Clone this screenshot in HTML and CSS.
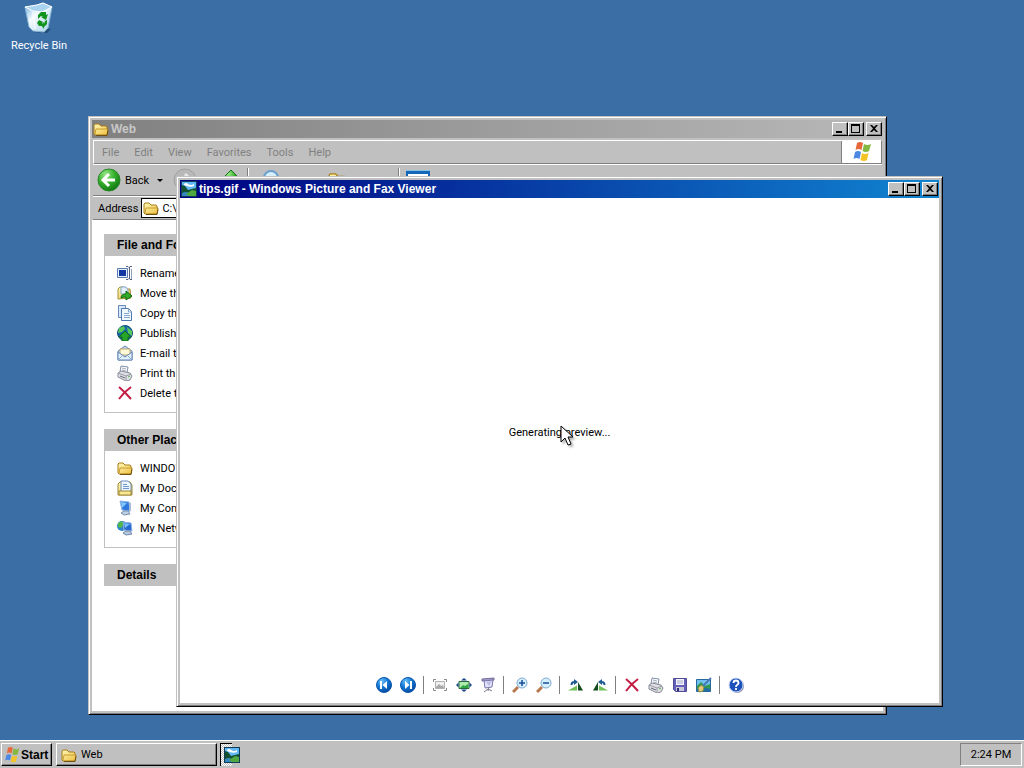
FILE: index.html
```html
<!DOCTYPE html>
<html lang="en">
<head>
    <meta charset="UTF-8">
    <meta name="viewport" content="width=device-width, initial-scale=1.0">
    <title>tips.gif - Windows Picture and Fax Viewer</title>
    <link rel="stylesheet" href="styles.css">
</head>
<body>
    <!-- Shared icons -->
    <svg class="icon-defs" aria-hidden="true">
        <defs>
            <linearGradient id="gFolder" x1="0" y1="0" x2="1" y2="1">
                <stop offset="0" stop-color="#fff8b8"/><stop offset="1" stop-color="#eec040"/>
            </linearGradient>
            <radialGradient id="gGreen" cx=".35" cy=".25" r=".8">
                <stop offset="0" stop-color="#9be88a"/><stop offset=".5" stop-color="#35b02c"/><stop offset="1" stop-color="#0f7412"/>
            </radialGradient>
            <radialGradient id="gBlue" cx=".35" cy=".25" r=".8">
                <stop offset="0" stop-color="#6cc0f8"/><stop offset=".5" stop-color="#1478d4"/><stop offset="1" stop-color="#06469c"/>
            </radialGradient>
            <linearGradient id="gBin" x1="0" y1="0" x2="1" y2="1">
                <stop offset="0" stop-color="#6ca8dc"/><stop offset=".4" stop-color="#f4fcff"/><stop offset="1" stop-color="#a4cce8"/>
            </linearGradient>
            <symbol id="folder" viewBox="0 0 16 16">
                <path d="M1 13V4l1-1h4l2 2h5l1 1v2h1l-1 6H2z" fill="url(#gFolder)" stroke="#a87c18"/>
                <path d="M2 13l1-5h11" fill="none" stroke="#c89c30"/>
                <path d="M3 14.500h11l1-5" fill="none" stroke="#705010"/>
            </symbol>
            <symbol id="picture" viewBox="0 0 16 16">
                <path d="M0 0h16v16H0z" fill="#103c58"/>
                <path d="M1 1h14v9H1z" fill="#60b8f4"/>
                <path d="M3 3q2-2 4 0 3 2 6 0v2q-4 2-10-1z" fill="#fff"/>
                <path d="M1 4l3 1 3 4 8-2v6H1z" fill="#125030"/>
                <path d="M1 12q4-2 7 0t7 0v3H1z" fill="#3488c0"/>
                <path d="M5 13l6-4 4 1v5H8z" fill="#50a840"/>
            </symbol>
            <symbol id="flag" viewBox="0 0 20 20">
                <path d="M5 1q3-2 6 0L9.500 8q-3-2-6 0z" fill="#e8683c"/>
                <path d="M12 2q3 2 7 0l-2 7q-3 2-6.500 0z" fill="#84b840"/>
                <path d="M3 10q3-2 6 0l-1.500 7q-3-2-6 0z" fill="#4c88e4"/>
                <path d="M10 11q3 2 6.500 0L15 18q-3 2-6.500 0z" fill="#f4c424"/>
            </symbol>
            <symbol id="bin" viewBox="0 0 32 32">
                <path d="M10 30l14 1 4-4-13-2z" fill="#183858" opacity=".6"/>
                <path d="M2 5l4 20 4 4 11 1 4-4 4-21-9-4-6 2z" fill="url(#gBin)" stroke="#88b4d4"/>
                <path d="M2 5l8 4 9 1 10-5-9-4-6 2z" fill="#a8d4f0" stroke="#fff"/>
                <path d="M10 10l2 17" stroke="#fff" stroke-width="2" opacity=".6"/>
                <path d="M15 17v-4l3-3h5v3l2-1-2 6-5-3 2-1h-2zM24 18v4l-3 3v2l-3-4 3-3v2l1-3zM16 18l4 2-1 1 1 3h-4l-2-3z" fill="#12941c"/>
            </symbol>
            <symbol id="back" viewBox="0 0 24 24">
                <circle cx="12" cy="12" r="11" fill="url(#gGreen)" stroke="#288828"/>
                <path d="M18 12H7M12 6l-6 6 6 6" fill="none" stroke="#fff" stroke-width="3"/>
            </symbol>
            <symbol id="forward" viewBox="0 0 24 24">
                <circle cx="12" cy="12" r="11" fill="#b8b8b8" stroke="#a0a0a0"/>
                <path d="M6 12h11M12 6l6 6-6 6" fill="none" stroke="#e8e8e8" stroke-width="3"/>
            </symbol>
            <symbol id="up" viewBox="0 0 20 20">
                <path d="M1 8h18v11H1z" fill="url(#gFolder)" stroke="#a87c18"/>
                <path d="M10 0l8 8h-4v8H6V8H2z" fill="url(#gGreen)" stroke="#187018"/>
            </symbol>
            <symbol id="search" viewBox="0 0 20 20">
                <path d="M5 13l-4 5" stroke="#b07840" stroke-width="3"/>
                <circle cx="9" cy="8" r="7" fill="#d8f0fc" stroke="#6ca0cc" stroke-width="2"/>
            </symbol>
            <symbol id="views" viewBox="0 0 24 20">
                <path d="M1 1h22v18H1z" fill="#fff" stroke="#1864b0" stroke-width="2"/>
                <path d="M0 0h24v4H0z" fill="#1468b8"/>
                <path d="M0 0h24v1H0z" fill="#88c0ec"/>
            </symbol>
            <symbol id="rename" viewBox="0 0 16 16">
                <path d="M.5 3.500h10v9H.5z" fill="#e8f0fc" stroke="#5878b0"/>
                <path d="M2 5h7v6H2z" fill="#1038a0"/>
                <path d="M9 1.500h2l1 1 1-1h2M12.500 2v12M9 14.500h2l1-1 1 1h2" fill="none" stroke="#506080"/>
                <path d="M14.500 4v10" stroke="#90a0b8"/>
            </symbol>
            <symbol id="move" viewBox="0 0 16 16">
                <path d="M1 14V4l2-2h4l1 2h5l1 9z" fill="url(#gFolder)" stroke="#a09038"/>
                <path d="M4 2h5l2 3v4H4z" fill="#e4f0fc" stroke="#88a8cc"/>
                <path d="M4 13q0-4 5-4V6l6 5-6 4v-3q-3 0-5 1z" fill="#30ac28" stroke="#106810"/>
            </symbol>
            <symbol id="copy" viewBox="0 0 16 16">
                <path d="M1.500.5h7v12h-7z" fill="#d8e8fc" stroke="#6488b8"/>
                <path d="M4.500 3.500h7l3 3v9h-10z" fill="#f0f8ff" stroke="#5078ac"/>
                <path d="M11.500 4v3h3M7 8.500h5M7 10.500h6M7 12.500h6" fill="none" stroke="#88a8d0"/>
            </symbol>
            <symbol id="publish" viewBox="0 0 16 16">
                <circle cx="8" cy="8" r="7.500" fill="#1868a8" stroke="#105078"/>
                <path d="M2 3l5-2 1 3-3 3-4 1zM10 2l5 4v5l-4-3z" fill="#58c858"/>
                <path d="M8 6l6 6h-3v4H5v-4H2z" fill="#28a428" stroke="#106c18"/>
            </symbol>
            <symbol id="email" viewBox="0 0 16 16">
                <path d="M1 6l7-5 7 5v9H1z" fill="#c0d8f4" stroke="#6484b0"/>
                <path d="M3 4h10v6H3z" fill="#fff8d8" stroke="#c0a868"/>
                <path d="M1 7l7 5 7-5v8H1z" fill="#e0f0ff" stroke="#6484b0"/>
                <path d="M1 15l5-5M15 15l-5-5" stroke="#88a8cc"/>
            </symbol>
            <symbol id="printer" viewBox="0 0 16 16">
                <path d="M3 7l1-6 7 1-1 6z" fill="#fff" stroke="#8090a8"/>
                <path d="M5 3l4 1M5 5l4 1" stroke="#a0a8b8"/>
                <path d="M1 8l3-2 9 2 2 3-2 4-4 1-8-4z" fill="#e0e0e4" stroke="#888c98"/>
                <path d="M1 8l8 3 5-2M9 11v5" fill="none" stroke="#989ca8"/>
                <path d="M3 11l5 2" stroke="#606878"/>
                <path d="M11 12l2-1" stroke="#58b050"/>
            </symbol>
            <symbol id="delete" viewBox="0 0 16 16">
                <path d="M2 2q6 5 12 12M14 2Q7 7 2 14" fill="none" stroke="#c41c44" stroke-width="2"/>
            </symbol>
            <symbol id="documents" viewBox="0 0 16 16">
                <path d="M1 15V4l2-2h10l2 3v10z" fill="url(#gFolder)" stroke="#a08838"/>
                <path d="M4 1h7l3 3v9H4z" fill="#eef6ff" stroke="#6c90bc"/>
                <path d="M6 4.500h4M6 6.500h6M6 8.500h6" stroke="#6c98cc"/>
                <path d="M2 11h12v4H2z" fill="#f8e890" stroke="#a08838"/>
            </symbol>
            <symbol id="computer" viewBox="0 0 16 16">
                <path d="M3 1l9 1 1 9-8-1z" fill="#2c78dc" stroke="#8cb4e4"/>
                <path d="M4 2l6 1-5 5z" fill="#80c8fc"/>
                <path d="M12 2l2 1v8l-2 1z" fill="#a8bcd8"/>
                <path d="M7 11h4l2 3-6 1-3-2z" fill="#c0d0e4" stroke="#7890b0"/>
            </symbol>
            <symbol id="network" viewBox="0 0 16 16">
                <circle cx="5" cy="6" r="5" fill="#2c84cc"/>
                <path d="M1 3l4-2 2 3-3 4-3-1z" fill="#50b848"/>
                <path d="M6 2l8 1 1 8-8-1z" fill="#2468d0" stroke="#8cb0e0"/>
                <path d="M7 3l6 1-5 4z" fill="#78c0f8"/>
                <path d="M9 11h4l2 3-6 1-3-2z" fill="#b8c8dc" stroke="#7088a8"/>
            </symbol>
            <symbol id="previous" viewBox="0 0 16 16">
                <circle cx="8" cy="8" r="7.500" fill="url(#gBlue)" stroke="#0c58b0"/>
                <path d="M5 4v8" stroke="#fff" stroke-width="2"/>
                <path d="M11 4v8L6.500 8z" fill="#fff"/>
            </symbol>
            <symbol id="next" viewBox="0 0 16 16">
                <circle cx="8" cy="8" r="7.500" fill="url(#gBlue)" stroke="#0c58b0"/>
                <path d="M11 4v8" stroke="#fff" stroke-width="2"/>
                <path d="M5 4v8l4.500-4z" fill="#fff"/>
            </symbol>
            <symbol id="bestfit" viewBox="0 0 16 16">
                <path d="M1.500 5V2.500H4M12 2.500h2.500V5M14.500 11v2.500H12M4 13.500H1.500V11" fill="none" stroke="#888"/>
                <path d="M3.500 4.500h9v7h-9z" fill="#f0f0f0" stroke="#b0b0b0"/>
                <path d="M4 10l3-3 2 2 2-1 1 3H4z" fill="#a8a8a8"/>
            </symbol>
            <symbol id="actual" viewBox="0 0 16 16">
                <path d="M3 4.500h10v7H3z" fill="#b0ecb0" stroke="#286838"/>
                <path d="M4 11l3-3 2 1 3-2v4z" fill="#30a840"/>
                <path d="M5 3.500h6L8 1zM5 12.500h6L8 15zM2.500 5.500v5L0 8zM13.500 5.500v5L16 8z" fill="#184888"/>
            </symbol>
            <symbol id="slideshow" viewBox="0 0 16 16">
                <path d="M2 2l12-1v2L2 4z" fill="#a8a0d0" stroke="#706c98"/>
                <path d="M4 4l9-1-1 7-7 1z" fill="#e4e4fc" stroke="#7c78ac"/>
                <path d="M9 10l-1 4M8 12l-4 3M8 12l4 2" stroke="#807c90"/>
                <path d="M6 5l3 4 3-5" fill="#c0bce8"/>
            </symbol>
            <symbol id="zoomin" viewBox="0 0 16 16">
                <path d="M6 10l-5 5" stroke="#b87850" stroke-width="3"/>
                <circle cx="10" cy="6" r="5" fill="#d4f0fc" stroke="#80a8d0"/>
                <path d="M7 6h6M10 3v6" stroke="#184c98" stroke-width="1.500"/>
            </symbol>
            <symbol id="zoomout" viewBox="0 0 16 16">
                <path d="M6 10l-5 5" stroke="#b87850" stroke-width="3"/>
                <circle cx="10" cy="6" r="5" fill="#d4f0fc" stroke="#80a8d0"/>
                <path d="M7 6h6" stroke="#184c98" stroke-width="1.500"/>
            </symbol>
            <symbol id="rotateright" viewBox="0 0 16 16">
                <path d="M0 13.500h9v-5z" fill="#70c058"/>
                <path d="M10 13.500V5l5 8.500z" fill="#104c20"/>
                <path d="M3.500 8q0-3 3-3" fill="none" stroke="#205c94" stroke-width="2"/>
                <path d="M6 2l4 3-4 3z" fill="#205c94"/>
            </symbol>
            <symbol id="rotateleft" viewBox="0 0 16 16">
                <path d="M16 13.500H7v-5z" fill="#70c058"/>
                <path d="M6 13.500V5l-5 8.500z" fill="#104c20"/>
                <path d="M12.500 8q0-3-3-3" fill="none" stroke="#205c94" stroke-width="2"/>
                <path d="M10 2L6 5l4 3z" fill="#205c94"/>
            </symbol>
            <symbol id="save" viewBox="0 0 16 16">
                <path d="M1.500 1.500h13v13h-11l-2-2z" fill="#6460b8" stroke="#504c98"/>
                <path d="M4 2h8v6H4z" fill="#f4f4ff"/>
                <path d="M5 4h6M5 6h6" stroke="#a8a8c8"/>
                <path d="M4 10h8v4H4z" fill="#c8c8dc"/>
                <path d="M5 11h2v3H5z" fill="#302c70"/>
            </symbol>
            <symbol id="edit" viewBox="0 0 16 16">
                <path d="M.5 2.500h14v12H.5z" fill="#70c0f0" stroke="#28689c"/>
                <path d="M1 9l4-4 4 4 5-2v7H1z" fill="#309850"/>
                <path d="M1 12q6-3 13 0v2H1z" fill="#2070a8"/>
                <path d="M15 1L7 9" stroke="#4878b8" stroke-width="2"/>
                <path d="M5 8l-3 3 1 4 4-1 1-4z" fill="#e8c878" stroke="#809048"/>
            </symbol>
            <symbol id="help" viewBox="0 0 16 16">
                <circle cx="9" cy="9" r="7" fill="#8890b0"/>
                <circle cx="8" cy="8" r="7" fill="#1c50bc" stroke="#d0dcf4"/>
                <path d="M5.500 6q0-2.500 2.500-2.500T10.500 6q0 1-1.500 2-1 .5-1 2M8 11v2" fill="none" stroke="#fff" stroke-width="1.800"/>
            </symbol>
            <symbol id="minimize" viewBox="0 0 12 10"><path d="M2 7h6v2H2z"/></symbol>
            <symbol id="maximize" viewBox="0 0 12 10"><path d="M1 0h9v9H1zM2 2v6h7V2z" fill-rule="evenodd"/></symbol>
            <symbol id="close" viewBox="0 0 12 10"><path d="M2 1h2l2 2 2-2h2L7 4.500 10 8H8L6 6 4 8H2l3-3.500z"/></symbol>
            <symbol id="cursor" viewBox="0 0 14 22">
                <path d="M1 1v16l4-4 3 7 3-1-3-7h5z" fill="#fff" stroke="#000"/>
            </symbol>
        </defs>
    </svg>

    <main class="desktop">
        <a class="shortcut" href="#">
            <svg class="icon-large"><use href="#bin"/></svg>
            <span>Recycle Bin</span>
        </a>

        <!-- Explorer window -->
        <section class="window explorer">
            <header class="title-bar inactive">
                <svg class="icon"><use href="#folder"/></svg>
                <h2>Web</h2>
                <div class="window-controls">
                    <button type="button" aria-label="Minimize"><svg><use href="#minimize"/></svg></button>
                    <button type="button" aria-label="Maximize"><svg><use href="#maximize"/></svg></button>
                    <button type="button" class="close" aria-label="Close"><svg><use href="#close"/></svg></button>
                </div>
            </header>

            <div class="menu-row">
                <nav class="menu">
                    <button type="button">File</button>
                    <button type="button">Edit</button>
                    <button type="button">View</button>
                    <button type="button">Favorites</button>
                    <button type="button">Tools</button>
                    <button type="button">Help</button>
                </nav>
                <div class="brand"><svg><use href="#flag"/></svg></div>
            </div>

            <div class="toolbar">
                <button type="button"><svg class="icon-nav"><use href="#back"/></svg>Back<span class="arrow"></span></button>
                <button type="button" aria-label="Forward"><svg class="icon-nav"><use href="#forward"/></svg><span class="arrow"></span></button>
                <button type="button" aria-label="Up"><svg class="icon-tool"><use href="#up"/></svg></button>
                <span class="divider"></span>
                <div class="toolbar-group">
                    <button type="button"><svg class="icon-tool"><use href="#search"/></svg>Search</button>
                    <button type="button"><svg class="icon-tool"><use href="#folder"/></svg>Folders</button>
                </div>
                <span class="divider"></span>
                <button type="button" aria-label="Views"><svg class="icon-nav"><use href="#views"/></svg></button>
            </div>

            <div class="address-bar">
                <label for="address">Address</label>
                <div class="address-field">
                    <svg class="icon"><use href="#folder"/></svg>
                    <input type="text" id="address" value="C:\WINDOWS\Web">
                </div>
            </div>

            <div class="explorer-body">
                <aside class="task-pane">
                    <section class="panel">
                        <h3>File and Folder Tasks</h3>
                        <ul>
                            <li><a href="#"><svg class="icon"><use href="#rename"/></svg>Rename this file</a></li>
                            <li><a href="#"><svg class="icon"><use href="#move"/></svg>Move this file</a></li>
                            <li><a href="#"><svg class="icon"><use href="#copy"/></svg>Copy this file</a></li>
                            <li><a href="#"><svg class="icon"><use href="#publish"/></svg>Publish this file</a></li>
                            <li><a href="#"><svg class="icon"><use href="#email"/></svg>E-mail this file</a></li>
                            <li><a href="#"><svg class="icon"><use href="#printer"/></svg>Print this file</a></li>
                            <li><a href="#"><svg class="icon"><use href="#delete"/></svg>Delete this file</a></li>
                        </ul>
                    </section>
                    <section class="panel">
                        <h3>Other Places</h3>
                        <ul>
                            <li><a href="#"><svg class="icon"><use href="#folder"/></svg>WINDOWS</a></li>
                            <li><a href="#"><svg class="icon"><use href="#documents"/></svg>My Documents</a></li>
                            <li><a href="#"><svg class="icon"><use href="#computer"/></svg>My Computer</a></li>
                            <li><a href="#"><svg class="icon"><use href="#network"/></svg>My Network Places</a></li>
                        </ul>
                    </section>
                    <section class="panel">
                        <h3>Details</h3>
                    </section>
                </aside>
            </div>
        </section>

        <!-- Picture viewer window -->
        <section class="window viewer">
            <header class="title-bar">
                <svg class="icon"><use href="#picture"/></svg>
                <h2>tips.gif - Windows Picture and Fax Viewer</h2>
                <div class="window-controls">
                    <button type="button" aria-label="Minimize"><svg><use href="#minimize"/></svg></button>
                    <button type="button" aria-label="Maximize"><svg><use href="#maximize"/></svg></button>
                    <button type="button" class="close" aria-label="Close"><svg><use href="#close"/></svg></button>
                </div>
            </header>
            <div class="preview">
                <p>Generating preview...<svg class="cursor"><use href="#cursor"/></svg></p>
            </div>
            <div class="viewer-tools">
                <button type="button" aria-label="Previous Image"><svg class="icon"><use href="#previous"/></svg></button>
                <button type="button" aria-label="Next Image"><svg class="icon"><use href="#next"/></svg></button>
                <span class="divider"></span>
                <button type="button" aria-label="Best Fit"><svg class="icon"><use href="#bestfit"/></svg></button>
                <button type="button" aria-label="Actual Size"><svg class="icon"><use href="#actual"/></svg></button>
                <button type="button" aria-label="Start Slide Show"><svg class="icon"><use href="#slideshow"/></svg></button>
                <span class="divider"></span>
                <button type="button" aria-label="Zoom In"><svg class="icon"><use href="#zoomin"/></svg></button>
                <button type="button" aria-label="Zoom Out"><svg class="icon"><use href="#zoomout"/></svg></button>
                <span class="divider"></span>
                <button type="button" aria-label="Rotate Clockwise"><svg class="icon"><use href="#rotateright"/></svg></button>
                <button type="button" aria-label="Rotate Counterclockwise"><svg class="icon"><use href="#rotateleft"/></svg></button>
                <span class="divider"></span>
                <button type="button" aria-label="Delete"><svg class="icon"><use href="#delete"/></svg></button>
                <button type="button" aria-label="Print"><svg class="icon"><use href="#printer"/></svg></button>
                <button type="button" aria-label="Copy To"><svg class="icon"><use href="#save"/></svg></button>
                <button type="button" aria-label="Edit"><svg class="icon"><use href="#edit"/></svg></button>
                <span class="divider"></span>
                <button type="button" aria-label="Help"><svg class="icon"><use href="#help"/></svg></button>
            </div>
        </section>
    </main>

    <footer class="taskbar">
        <button type="button" class="start"><svg class="icon"><use href="#flag"/></svg>Start</button>
        <button type="button" class="task"><svg class="icon"><use href="#folder"/></svg>Web</button>
        <button type="button" class="task-pressed" aria-label="tips.gif"><svg class="icon"><use href="#picture"/></svg></button>
        <div class="clock">2:24 PM</div>
    </footer>
</body>
</html>
```
FILE: styles.css
```css
* {
    margin: 0;
    padding: 0;
    box-sizing: border-box;
}

body {
    display: flex;
    flex-direction: column;
    height: 100vh;
    overflow: hidden;
    background: #3a6ea5;
    color: #000;
    font: 11px/15px Roboto, Arial, sans-serif;
}

button {
    display: flex;
    align-items: center;
    border: none;
    background: none;
    color: inherit;
    font: inherit;
}

a {
    color: inherit;
    text-decoration: none;
}

svg {
    display: block;
    flex: none;
}

.icon-defs {
    position: absolute;
    width: 0;
    height: 0;
}

.icon {
    width: 16px;
    height: 16px;
}

.icon-tool {
    width: 20px;
    height: 20px;
}

.icon-nav {
    width: 24px;
    height: 24px;
}

.icon-large {
    width: 32px;
    height: 32px;
}

/* Desktop */
.desktop {
    position: relative;
    flex: 1;
    min-height: 0;
}

.shortcut {
    display: flex;
    flex-direction: column;
    align-items: center;
    gap: 4px;
    width: 78px;
    padding-top: 2px;
    color: #fff;
}

/* Windows */
.window {
    position: absolute;
    display: flex;
    flex-direction: column;
    padding: 3px;
    background: #c0c0c0;
    border: 1px solid;
    border-color: #c0c0c0 #000 #000 #c0c0c0;
    box-shadow: inset 1px 1px #fff, inset -1px -1px #808080;
}

.explorer {
    top: 116px;
    right: 137px;
    bottom: 25px;
    left: 88px;
}

.viewer {
    top: 176px;
    right: 81px;
    bottom: 33px;
    left: 176px;
}

.title-bar {
    display: flex;
    align-items: center;
    flex: none;
    gap: 2px;
    height: 18px;
    padding: 0 1px;
    background: linear-gradient(90deg, #000080, #1084d0);
    color: #fff;
}

.title-bar.inactive {
    background: linear-gradient(90deg, #808080, #b8b8b8);
    color: #c8c8c8;
}

.title-bar h2 {
    flex: 1;
    font: bold 12px/14px "Liberation Sans", Arial, sans-serif;
}

.window-controls {
    display: flex;
}

.window-controls button {
    justify-content: center;
    width: 16px;
    height: 14px;
    background: #c0c0c0;
    color: #000;
    border: 1px solid;
    border-color: #fff #000 #000 #fff;
    box-shadow: inset -1px -1px #808080;
}

.window-controls .close {
    margin-left: 2px;
}

.window-controls svg {
    width: 12px;
    height: 10px;
}

/* Explorer bars */
.menu-row {
    display: flex;
    flex: none;
    height: 24px;
    margin: 2px 1px 0;
    border: 1px solid;
    border-color: #fff #808080 #808080 #fff;
}

.menu {
    display: flex;
    flex: 1;
    gap: 15px;
    padding-left: 8px;
    color: #808080;
}

.brand {
    display: flex;
    align-items: center;
    justify-content: center;
    width: 40px;
    background: #fff;
    border-left: 1px solid #808080;
}

.brand svg {
    width: 20px;
    height: 20px;
}

.toolbar {
    display: flex;
    align-items: center;
    flex: none;
    gap: 6px;
    height: 32px;
    margin: 0 1px;
    padding-left: 4px;
    border-top: 1px solid #fff;
    border-bottom: 1px solid #808080;
}

.toolbar button {
    gap: 4px;
}

.toolbar-group {
    display: flex;
    gap: 8px;
    padding: 0 4px 0 7px;
}

.arrow {
    margin: 0 4px;
    border: 3px solid transparent;
    border-top-color: #000;
    border-bottom: none;
}

.divider {
    width: 2px;
    height: 24px;
    border-left: 1px solid #808080;
    border-right: 1px solid #fff;
}

.address-bar {
    display: flex;
    align-items: center;
    flex: none;
    gap: 3px;
    height: 24px;
    margin: 0 1px;
    padding: 0 4px 0 5px;
    border-top: 1px solid #fff;
    border-bottom: 1px solid #808080;
}

.address-field {
    display: flex;
    align-items: center;
    flex: 1;
    gap: 3px;
    height: 20px;
    padding-left: 1px;
    background: #fff;
    border: 1px solid #000;
}

.address-field input {
    flex: 1;
    border: none;
    background: none;
    font: inherit;
}

.explorer-body {
    flex: 1;
    min-height: 0;
    overflow: hidden;
    background: #fff;
}

/* Task pane */
.task-pane {
    display: flex;
    flex-direction: column;
    gap: 16px;
    width: 209px;
    padding: 14px 12px;
}

.panel h3 {
    padding-left: 13px;
    background: #c0c0c0;
    font: bold 12px/22px "Liberation Sans", Arial, sans-serif;
}

.panel ul {
    padding: 7px 12px 9px;
    list-style: none;
    border: 1px solid #c0c0c0;
    border-top: none;
}

.panel a {
    display: flex;
    align-items: center;
    gap: 7px;
    height: 20px;
    white-space: nowrap;
}

/* Picture viewer */
.preview {
    display: flex;
    align-items: center;
    justify-content: center;
    flex: 1;
    background: #fff;
}

.preview p {
    position: relative;
}

.cursor {
    position: absolute;
    top: 0;
    left: 51px;
    width: 14px;
    height: 22px;
    filter: drop-shadow(2px 2px 1px rgba(0, 0, 0, 0.3));
}

.viewer-tools {
    display: flex;
    align-items: center;
    justify-content: center;
    flex: none;
    height: 36px;
    background: #fff;
}

.viewer-tools button {
    justify-content: center;
    width: 24px;
    height: 24px;
}

.viewer-tools .divider {
    width: 1px;
    height: 18px;
    margin: 0 4px 0 3px;
    border-right: none;
}

/* Taskbar */
.taskbar {
    display: flex;
    align-items: stretch;
    flex: none;
    height: 28px;
    padding: 2px 2px 2px 1px;
    background: #c0c0c0;
    border-top: 1px solid #fff;
}

.start,
.task {
    gap: 4px;
    padding: 0 4px;
    border: 1px solid;
    border-color: #fff #000 #000 #fff;
    box-shadow: inset -1px -1px #808080;
}

.start {
    width: 51px;
    gap: 1px;
    padding: 0 2px;
    font: bold 12px/14px "Liberation Sans", Arial, sans-serif;
}

.task {
    width: 161px;
    margin: 0 3px 0 4px;
}

.task-pressed {
    padding-left: 3px;
    border-left: 1px solid #000;
    background:
        linear-gradient(#000, #000) 0 0 / 11px 1px no-repeat,
        linear-gradient(#c0c0c0, #c0c0c0) 11px 0 / 20px 100% no-repeat,
        repeating-conic-gradient(#fff 0 25%, #c0c0c0 0 50%) 0 0 / 2px 2px;
}

.clock {
    display: flex;
    align-items: center;
    justify-content: center;
    width: 62px;
    margin-left: auto;
    border: 1px solid;
    border-color: #808080 #fff #fff #808080;
}
```
